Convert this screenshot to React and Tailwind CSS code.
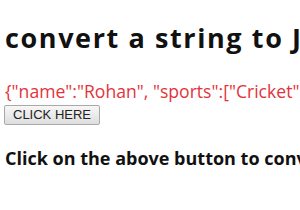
export default function App() {
  return (
    <div className="w-[300px] h-[210px] overflow-hidden bg-white pl-[5px] whitespace-nowrap font-['Open_Sans',sans-serif]">
      <h1 className="pt-[20px] text-[27px] leading-[36px] tracking-[1.6px] font-bold text-[#111]">convert a string to JSON</h1>
      <p className="mt-[25px] text-[17.6px] leading-[20px] text-[#e3333b]">{'{"name":"Rohan", "sports":["Cricket", "Football"]}'}</p>
      <button className="block mt-[4px] -ml-[1px] h-[20px] px-[8px] border border-[#a9a9a9] rounded-[2px] bg-gradient-to-b from-[#f7f7f7] to-[#dedede] font-['Liberation_Sans',sans-serif] text-[13px] leading-[18px] text-[#222]">CLICK HERE</button>
      <p className="mt-[21px] text-[18px] leading-[24px] font-bold text-[#111]">Click on the above button to convert</p>
    </div>
  )
}
